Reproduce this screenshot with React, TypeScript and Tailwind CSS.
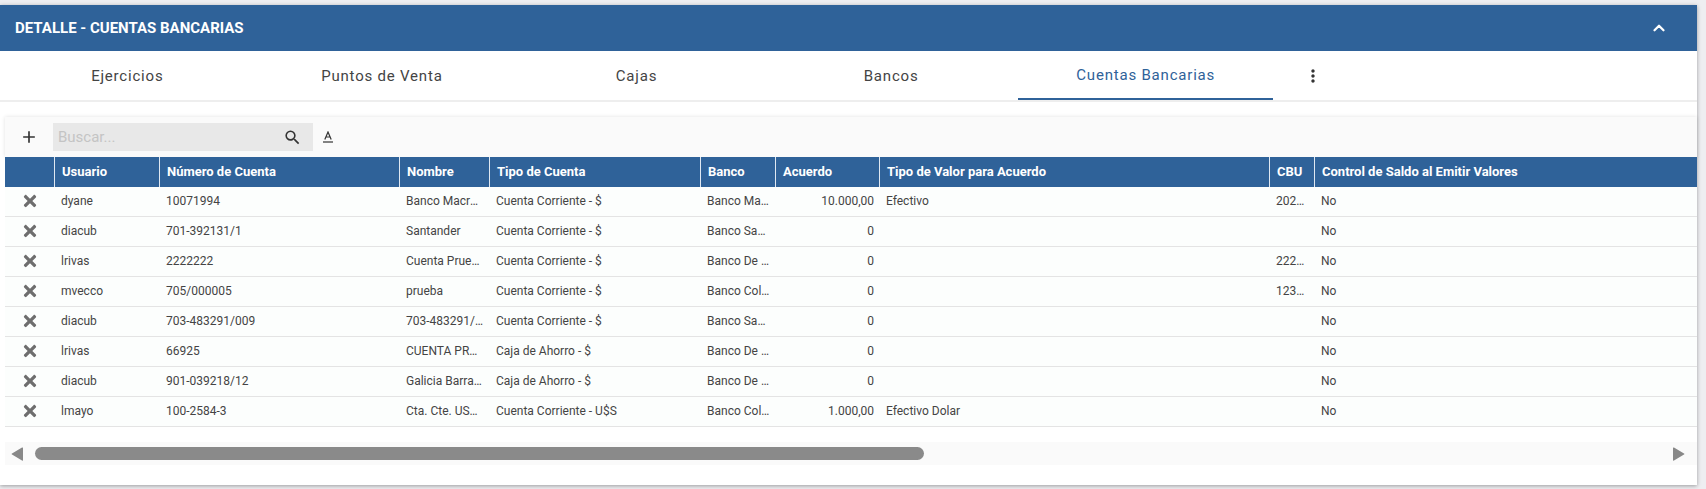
import { ChevronUp } from 'lucide-react'
import { FaTimes } from 'react-icons/fa'
import { MdAdd, MdMoreVert, MdSearch } from 'react-icons/md'

const tabs = ['Ejercicios', 'Puntos de Venta', 'Cajas', 'Bancos', 'Cuentas Bancarias']

const columns = [
  { title: 'Usuario', width: 'w-[105px]' },
  { title: 'Número de Cuenta', width: 'w-[240px]' },
  { title: 'Nombre', width: 'w-[90px]' },
  { title: 'Tipo de Cuenta', width: 'w-[211px]' },
  { title: 'Banco', width: 'w-[75px]' },
  { title: 'Acuerdo', width: 'w-[104px]' },
  { title: 'Tipo de Valor para Acuerdo', width: 'w-[390px]' },
  { title: 'CBU', width: 'w-[45px]' },
  { title: 'Control de Saldo al Emitir Valores', width: 'flex-1' },
]

const rows = [
  ['dyane', '10071994', 'Banco Macro Cuenta', 'Cuenta Corriente - $', 'Banco Macro', '10.000,00', 'Efectivo', '2020000', 'No'],
  ['diacub', '701-392131/1', 'Santander', 'Cuenta Corriente - $', 'Banco Santander', '0', '', '', 'No'],
  ['lrivas', '2222222', 'Cuenta Prueba', 'Cuenta Corriente - $', 'Banco De Galicia', '0', '', '2222222', 'No'],
  ['mvecco', '705/000005', 'prueba', 'Cuenta Corriente - $', 'Banco Colombia', '0', '', '1234567', 'No'],
  ['diacub', '703-483291/009', '703-483291/009', 'Cuenta Corriente - $', 'Banco Santander', '0', '', '', 'No'],
  ['lrivas', '66925', 'CUENTA PRUEBA', 'Caja de Ahorro - $', 'Banco De Galicia', '0', '', '', 'No'],
  ['diacub', '901-039218/12', 'Galicia Barracas', 'Caja de Ahorro - $', 'Banco De Galicia', '0', '', '', 'No'],
  ['lmayo', '100-2584-3', 'Cta. Cte. USD Colombia', 'Cuenta Corriente - U$S', 'Banco Colombia', '1.000,00', 'Efectivo Dolar', '', 'No'],
]

function App() {
  return (
    <div className="h-[489px] overflow-hidden bg-[#eeeef1] pt-[5px] pr-[9px] font-['Roboto',sans-serif]">
      <div className="h-[480px] bg-white shadow-[0_1px_4px_rgba(0,0,0,0.35)]">
        <div className="flex h-[46px] items-center justify-between bg-[#2f6299] pl-[15px] pr-[29px]">
          <span className="text-[15px] font-bold text-white">DETALLE - CUENTAS BANCARIAS</span>
          <ChevronUp size={18} strokeWidth={3} className="text-white" />
        </div>

        <div className="mt-px flex h-[50px] items-stretch border-b-2 border-[#eeeeee]">
          {tabs.map((tab) => (
            <div
              key={tab}
              className={
                tab === 'Cuentas Bancarias'
                  ? 'flex w-[254.6px] items-center justify-center border-b-2 border-[#2f6299] text-[15px] tracking-[0.8px] text-[#2f6299]'
                  : 'flex w-[254.6px] items-center justify-center text-[15px] tracking-[0.8px] text-[#444444]'
              }
            >
              {tab}
            </div>
          ))}
          <div className="flex w-[80px] items-center justify-center">
            <MdMoreVert size={20} className="text-[#333333]" />
          </div>
        </div>

        <div className="mt-[15px] pl-[5px]">
          <div className="flex h-[40px] items-center bg-[#fafafa] shadow-[0_0_4px_rgba(0,0,0,0.12)]">
            <MdAdd size={20} className="ml-[14px] text-[#333333]" />
            <div className="ml-[14px] flex h-[28px] w-[260px] items-center justify-between bg-[#e8e8e8] pl-[5px] pr-[11px]">
              <span className="text-[15px] text-[#c4c4c4]">Buscar...</span>
              <MdSearch size={19} className="text-[#333333]" />
            </div>
            <div className="ml-[9px] flex flex-col items-center text-[#333333]">
              <svg width="12" height="13" viewBox="0 0 12 13" fill="none" stroke="currentColor">
                <path d="M2.8 8.5 L6 1 L9.2 8.5 M4 6 H8" strokeWidth="1.2" />
                <path d="M1 11 H11" strokeWidth="1.2" />
              </svg>
            </div>
          </div>

          <div className="flex h-[30px] bg-[#2f6299]">
            <div className="w-[49px]" />
            {columns.map((col) => (
              <div
                key={col.title}
                className={`${col.width} flex items-center truncate border-l border-[#dfe8f2] pl-[7px] text-[13px] font-bold text-white`}
              >
                {col.title}
              </div>
            ))}
          </div>

          {rows.map((row, i) => (
            <div key={i} className="flex h-[30px] border-b border-[#e4e4e4] bg-[#fcfefd] text-[12px] text-[#444444]">
              <div className="flex w-[49px] items-center justify-center pl-[1px] pb-[1px]">
                <FaTimes size={18} className="text-[#6e6e6e]" />
              </div>
              {columns.map((col, c) => (
                <div
                  key={col.title}
                  className={
                    c === 5
                      ? `${col.width} truncate pr-[5px] pl-[7px] text-right leading-[28px]`
                      : `${col.width} truncate pr-[5px] pl-[7px] leading-[28px]`
                  }
                >
                  {row[c]}
                </div>
              ))}
            </div>
          ))}

          <div className="mt-[15px] flex h-[23px] items-center bg-[#fafafa]">
            <svg width="12" height="14" viewBox="0 0 12 14" className="ml-[6px] text-[#888888]">
              <path d="M12 1 V13 Q12 14 11 13.4 L1 7.6 Q0 7 1 6.4 L11 0.6 Q12 0 12 1 Z" fill="currentColor" />
            </svg>
            <div className="ml-[12px] h-[13px] w-[889px] rounded-full bg-[#8a8a8a]" />
            <div className="flex-1" />
            <svg width="12" height="14" viewBox="0 0 12 14" className="mr-[12px] text-[#888888]">
              <path d="M0 1 V13 Q0 14 1 13.4 L11 7.6 Q12 7 11 6.4 L1 0.6 Q0 0 0 1 Z" fill="currentColor" />
            </svg>
          </div>
        </div>
      </div>
    </div>
  )
}

export default App
